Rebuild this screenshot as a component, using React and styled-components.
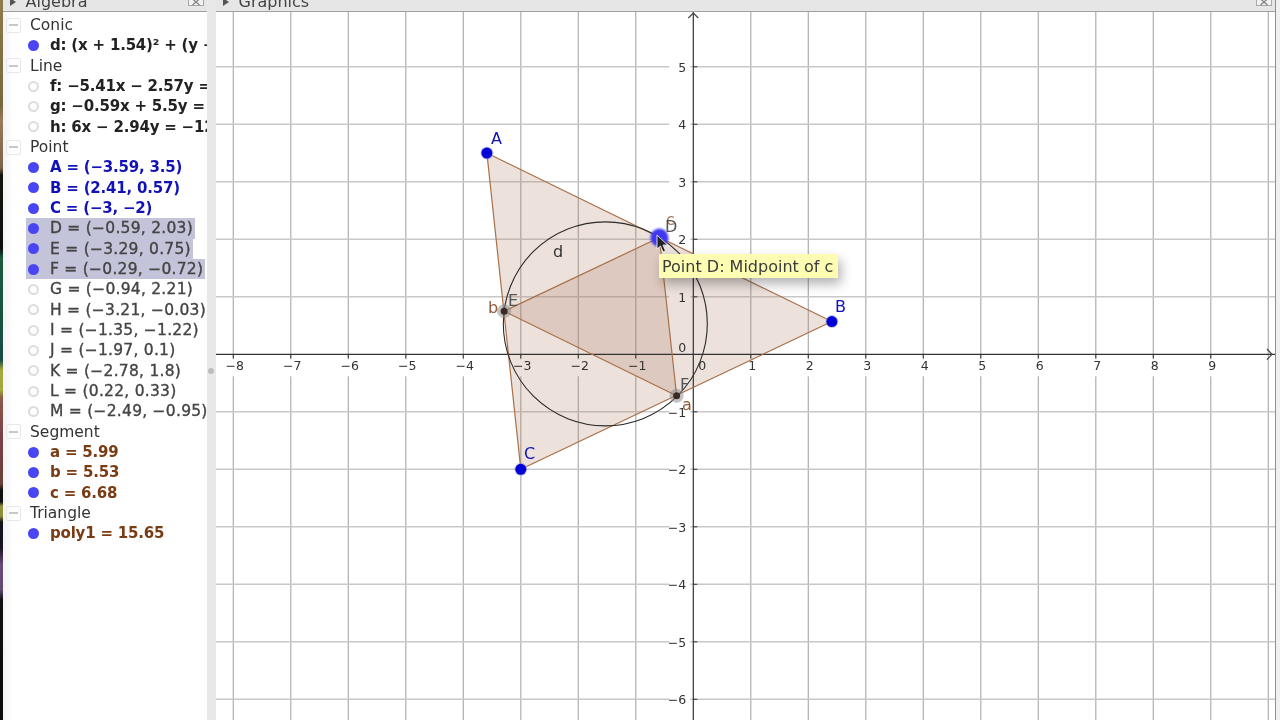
import React from "react";
import styled, { createGlobalStyle } from "styled-components";

const GlobalStyle = createGlobalStyle`
  html, body {
    margin: 0;
    padding: 0;
    height: 100%;
    overflow: hidden;
    background: #fff;
    font-family: "DejaVu Sans", "Liberation Sans", sans-serif;
  }
`;

const Screen = styled.div`
  display: flex;
  width: 1280px;
  height: 720px;
  overflow: hidden;
  background: #fff;
  filter: blur(0.4px);
`;

const Wallpaper = styled.div`
  flex: 0 0 3px;
  background: linear-gradient(
    180deg,
    #8f7a4e 0,
    #75683f 105px,
    #9a7a58 120px,
    #7c6248 168px,
    #14140f 175px,
    #0c0c0c 248px,
    #1c5a3e 258px,
    #1a4a44 360px,
    #a2a83c 370px,
    #a2a83c 390px,
    #8a5a48 398px,
    #7a3f48 440px,
    #6a4038 484px,
    #101010 490px,
    #101012 502px,
    #90903c 506px,
    #90903c 516px,
    #14141a 522px,
    #1a1420 548px,
    #6a4a78 565px,
    #604a70 590px,
    #0e0e12 600px,
    #0a0a0a 720px
  );
`;

const AlgebraPanel = styled.section`
  flex: 0 0 204px;
  display: flex;
  flex-direction: column;
  overflow: hidden;
`;

const Divider = styled.div`
  flex: 0 0 9px;
  position: relative;
  background: #e8e8e8;
  &::after {
    content: "";
    position: absolute;
    left: 1px;
    top: 368px;
    width: 6px;
    height: 6px;
    border-radius: 50%;
    background: #bdbdbd;
  }
`;

const GraphicsPanel = styled.section`
  flex: 0 0 1059px;
  display: flex;
  flex-direction: column;
  overflow: hidden;
`;

const RightEdge = styled.div`
  flex: 1;
  background: #f0f0f0;
  border-left: 1.5px solid #8f8f8f;
`;

const TitleBar = styled.header`
  flex: 0 0 12px;
  box-sizing: border-box;
  display: flex;
  align-items: flex-end;
  justify-content: space-between;
  padding: 0 3px 0 6.5px;
  overflow: hidden;
  background: #e6e6e6;
  border-bottom: 1px solid #a0a0a0;
`;

const TitleText = styled.div`
  display: flex;
  align-items: center;
  gap: 10px;
  height: 18px;
  flex: none;
  font-size: 16px;
  line-height: 18px;
  color: #444;
  white-space: nowrap;
`;

const Arrow = styled.span`
  width: 0;
  height: 0;
  border-left: 6px solid #555;
  border-top: 4px solid transparent;
  border-bottom: 4px solid transparent;
`;

const CloseBox = styled.svg`
  flex: none;
  display: block;
  width: 16px;
  height: 14px;
  margin-bottom: 5px;
  background: #f2f2f2;
`;

const Tree = styled.div`
  flex: 1;
  padding-top: 3px;
  background: linear-gradient(90deg, #f3f3f3 0, #fff 10px);
`;

const GroupRow = styled.div`
  display: flex;
  align-items: center;
  height: 20.33px;
  padding-left: 3px;
  font-size: 15.5px;
  color: #333;
  white-space: nowrap;
`;

const Toggle = styled.span`
  box-sizing: border-box;
  flex: none;
  width: 15px;
  height: 15px;
  margin-right: 9px;
  border: 1px solid #e8e8e8;
  border-radius: 2px;
  position: relative;
  &::after {
    content: "";
    position: absolute;
    left: 2px;
    right: 2px;
    top: 5.5px;
    height: 2px;
    background: #c8c8c8;
  }
`;

const ItemRow = styled.div`
  display: flex;
  align-items: center;
  height: 20.33px;
  padding-left: 25px;
`;

const SelectedRow = styled(ItemRow)`
  width: fit-content;
  margin-left: 23px;
  padding-left: 2px;
  padding-right: 2px;
  background: #c3c3d9;
`;

const Marble = styled.span`
  box-sizing: border-box;
  flex: none;
  width: 11px;
  height: 11px;
  border-radius: 50%;
  margin-right: 11px;
  background: ${(p) => (p.$on ? "#4a45f2" : "#fff")};
  border: ${(p) => (p.$on ? "none" : "2px solid #dcdcdc")};
`;

const ItemText = styled.span`
  font-size: ${(p) => (p.$dim ? "15.5px" : "15px")};
  line-height: 20px;
  font-weight: ${(p) => (p.$dim ? 400 : 700)};
  color: ${(p) => p.$color};
  white-space: nowrap;
  letter-spacing: ${(p) => (p.$dim ? "0.25px" : "-0.2px")};
  -webkit-text-stroke: ${(p) => (p.$dim ? "0.35px" : "0")};
`;

const Canvas = styled.div`
  flex: 1;
  position: relative;
  background: #fff;
`;

const Plot = styled.svg`
  display: block;
  width: 1059px;
  height: 708px;
  font-family: "DejaVu Sans", "Liberation Sans", sans-serif;
`;

const Tip = styled.div`
  position: absolute;
  left: 443px;
  top: 242px;
  padding: 0 5px 0 3px;
  height: 24px;
  line-height: 26px;
  background: #fcfcb2;
  color: #3c3c3c;
  font-size: 16px;
  white-space: nowrap;
  box-shadow: 3px 6px 12px rgba(0, 0, 0, 0.3);
`;

const BLUE = "#1212b8";
const BROWN = "#7a3c14";

const tree = [
  { group: "Conic", items: [{ text: <>d: (x + 1.54)² + (y − 0.53)² = 3.11</>, on: true, color: "#222" }] },
  {
    group: "Line",
    items: [
      { text: "f: −5.41x − 2.57y = −9.86", color: "#222" },
      { text: "g: −0.59x + 5.5y = 6.04", color: "#222" },
      { text: "h: 6x − 2.94y = −12.2", color: "#222" },
    ],
  },
  {
    group: "Point",
    items: [
      { text: "A = (−3.59, 3.5)", on: true, color: BLUE },
      { text: "B = (2.41, 0.57)", on: true, color: BLUE },
      { text: "C = (−3, −2)", on: true, color: BLUE },
      { text: "D = (−0.59, 2.03)", on: true, color: "#444", dim: true, selected: true },
      { text: "E = (−3.29, 0.75)", on: true, color: "#444", dim: true, selected: true },
      { text: "F = (−0.29, −0.72)", on: true, color: "#444", dim: true, selected: true },
      { text: "G = (−0.94, 2.21)", color: "#444", dim: true },
      { text: "H = (−3.21, −0.03)", color: "#444", dim: true },
      { text: "I = (−1.35, −1.22)", color: "#444", dim: true },
      { text: "J = (−1.97, 0.1)", color: "#444", dim: true },
      { text: "K = (−2.78, 1.8)", color: "#444", dim: true },
      { text: "L = (0.22, 0.33)", color: "#444", dim: true },
      { text: "M = (−2.49, −0.95)", color: "#444", dim: true },
    ],
  },
  {
    group: "Segment",
    items: [
      { text: "a = 5.99", on: true, color: BROWN },
      { text: "b = 5.53", on: true, color: BROWN },
      { text: "c = 6.68", on: true, color: BROWN },
    ],
  },
  { group: "Triangle", items: [{ text: "poly1 = 15.65", on: true, color: BROWN }] },
];

// graph coordinates -> svg pixels (svg starts at 216,12 on the page)
const UNIT = 57.5;
const OX = 477.3;
const OY = 342.3;
const sx = (x) => OX + x * UNIT;
const sy = (y) => OY - y * UNIT;
const pair = ([x, y]) => `${sx(x)},${sy(y)}`;

const A = [-3.59, 3.5];
const B = [2.41, 0.57];
const C = [-3, -2];
const D = [-0.59, 2.03];
const E = [-3.29, 0.75];
const F = [-0.29, -0.72];

const xTicks = [-8, -7, -6, -5, -4, -3, -2, -1, 1, 2, 3, 4, 5, 6, 7, 8, 9];
const yTicks = [-6, -5, -4, -3, -2, -1, 1, 2, 3, 4, 5];
const minus = (v) => (v < 0 ? `−${-v}` : v);

function Graph() {
  return (
    <Plot viewBox="0 0 1059 708">
      <defs>
        <filter id="glow" x="-30%" y="-30%" width="160%" height="160%">
          <feGaussianBlur stdDeviation="1.2" />
        </filter>
      </defs>

      {[...xTicks, 10].map((v) => (
        <line key={v} x1={sx(v)} x2={sx(v)} y1="0" y2="708" stroke="#aeaeae" strokeWidth="1.2" />
      ))}
      {[...yTicks, -7].map((v) => (
        <line key={v} x1="0" x2="1059" y1={sy(v)} y2={sy(v)} stroke="#c8c8c8" strokeWidth="1.4" />
      ))}

      {/* grid lines break around the axis numbers, under the triangle fill */}
      {xTicks.map((v) => (
        <rect key={v} x={sx(v) - 3} y={OY + 5} width="6" height="17" fill="#fff" />
      ))}
      {yTicks.map((v) => (
        <rect key={v} x={OX - 24} y={sy(v) - 2} width="21" height="4" fill="#fff" />
      ))}

      <polygon points={[A, B, C].map(pair).join(" ")} fill="#a8785c" fillOpacity="0.22" />
      <polygon points={[D, E, F].map(pair).join(" ")} fill="#a8785c" fillOpacity="0.22" />

      <line x1="0" x2="1059" y1={OY} y2={OY} stroke="#333" strokeWidth="1.2" />
      <line x1={OX} x2={OX} y1="0" y2="708" stroke="#333" strokeWidth="1.2" />
      <path d={`M1051 ${OY - 5.3}l5 5.3-5 5.3`} fill="none" stroke="#444" strokeWidth="1.2" />
      <path d={`M${OX - 5} 6l5-5 5 5`} fill="none" stroke="#444" strokeWidth="1.2" />
      {xTicks.map((v) => (
        <line key={v} x1={sx(v)} x2={sx(v)} y1={OY} y2={OY + 4} stroke="#333" />
      ))}
      {yTicks.map((v) => (
        <line key={v} x1={OX} x2={OX + 4} y1={sy(v)} y2={sy(v)} stroke="#333" />
      ))}

      <g fontSize="12.5" fill="#333">
        {xTicks.map((v) => (
          <text key={v} x={sx(v) + 1.5} y={OY + 16} textAnchor="middle">
            {minus(v)}
          </text>
        ))}
        {yTicks.map((v) => (
          <text key={v} x={OX - 7} y={sy(v) + 5} textAnchor="end">
            {minus(v)}
          </text>
        ))}
        <text x={OX - 7} y={OY - 2} textAnchor="end">0</text>
        <text x={OX + 9} y={OY + 16} textAnchor="middle">0</text>
      </g>

      <g stroke="#a87048" strokeWidth="1.2">
        <line x1={sx(A[0])} y1={sy(A[1])} x2={sx(B[0])} y2={sy(B[1])} />
        <line x1={sx(B[0])} y1={sy(B[1])} x2={sx(C[0])} y2={sy(C[1])} />
        <line x1={sx(C[0])} y1={sy(C[1])} x2={sx(A[0])} y2={sy(A[1])} />
        <line x1={sx(D[0])} y1={sy(D[1])} x2={sx(E[0])} y2={sy(E[1])} />
        <line x1={sx(E[0])} y1={sy(E[1])} x2={sx(F[0])} y2={sy(F[1])} />
        <line x1={sx(F[0])} y1={sy(F[1])} x2={sx(D[0])} y2={sy(D[1])} />
      </g>

      <circle cx={sx(-1.53)} cy={sy(0.53)} r="102" fill="none" stroke="#2a2a2a" strokeWidth="1.1" />

      {[E, F].map((p) => (
        <g key={p[0]}>
          <circle cx={sx(p[0])} cy={sy(p[1])} r="7" fill="#888" fillOpacity="0.5" />
          <circle cx={sx(p[0])} cy={sy(p[1])} r="3.5" fill="#3a2a22" />
        </g>
      ))}
      <circle cx={sx(D[0])} cy={sy(D[1])} r="9" fill="#3f39ee" filter="url(#glow)" />

      {[A, B, C].map((p) => (
        <g key={p[0]}>
          <circle cx={sx(p[0])} cy={sy(p[1])} r="6.5" fill="#9a9ad0" fillOpacity="0.5" />
          <circle cx={sx(p[0])} cy={sy(p[1])} r="5.5" fill="#0000d8" />
        </g>
      ))}

      <g fontSize="16">
        <text x="275" y="132" fill={BLUE}>A</text>
        <text x="619" y="300" fill={BLUE}>B</text>
        <text x="308" y="447" fill={BLUE}>C</text>
        <text x="449" y="220" fill="#555">D</text>
        <text x="292" y="294" fill="#555">E</text>
        <text x="464" y="378" fill="#555">F</text>
        <text x="272" y="301" fill={BROWN} fillOpacity="0.85">b</text>
        <text x="466" y="398" fill={BROWN} fillOpacity="0.85">a</text>
        <text x="450" y="213" fill={BROWN} fillOpacity="0.7">c</text>
        <text x="337" y="245" fill="#333">d</text>
      </g>

      <path d="M441 223v14l3.5-3 2.5 6 2.5-1-2.5-6h4.5z" fill="#222" stroke="#fff" strokeWidth="0.8" />
    </Plot>
  );
}

function AlgebraTree() {
  return (
    <Tree>
      {tree.map((g) => (
        <React.Fragment key={g.group}>
          <GroupRow>
            <Toggle />
            {g.group}
          </GroupRow>
          {g.items.map((it, i) => {
            const Row = it.selected ? SelectedRow : ItemRow;
            return (
              <Row key={i}>
                <Marble $on={it.on} />
                <ItemText $color={it.color} $dim={it.dim}>
                  {it.text}
                </ItemText>
              </Row>
            );
          })}
        </React.Fragment>
      ))}
    </Tree>
  );
}

// only the bottom 6px of the box shows above the title bar's edge
function CloseIcon() {
  return (
    <CloseBox viewBox="0 0 16 14">
      <rect x="0.5" y="-2" width="15" height="15.5" fill="none" stroke="#a8a8a8" />
      <path d="M4.5 7l7 6M11.5 7l-7 6" fill="none" stroke="#808080" strokeWidth="1.2" />
    </CloseBox>
  );
}

export default function App() {
  return (
    <>
      <GlobalStyle />
      <Screen>
        <Wallpaper />
        <AlgebraPanel>
          <TitleBar>
            <TitleText>
              <Arrow />
              Algebra
            </TitleText>
            <CloseIcon />
          </TitleBar>
          <AlgebraTree />
        </AlgebraPanel>
        <Divider />
        <GraphicsPanel>
          <TitleBar>
            <TitleText>
              <Arrow />
              Graphics
            </TitleText>
            <CloseIcon />
          </TitleBar>
          <Canvas>
            <Graph />
            <Tip>Point D: Midpoint of c</Tip>
          </Canvas>
        </GraphicsPanel>
        <RightEdge />
      </Screen>
    </>
  );
}
